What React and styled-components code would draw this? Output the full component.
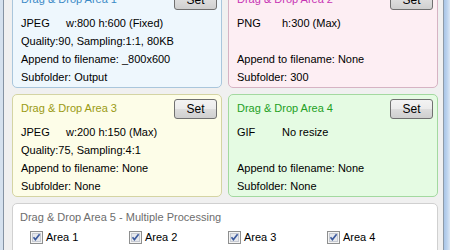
import React from "react";
import styled, { createGlobalStyle } from "styled-components";

const GlobalStyle = createGlobalStyle`
  html, body {
    margin: 0;
    padding: 0;
    width: 450px;
    height: 250px;
    overflow: hidden;
    background: #f0f0f0;
  }
`;

const areas = [
  {
    title: "Drag & Drop Area 1",
    tone: "blue",
    format: "JPEG",
    size: "w:800 h:600 (Fixed)",
    quality: "Quality:90, Sampling:1:1, 80KB",
    append: "_800x600",
    subfolder: "Output",
  },
  {
    title: "Drag & Drop Area 2",
    tone: "pink",
    format: "PNG",
    size: "h:300 (Max)",
    quality: "",
    append: "None",
    subfolder: "300",
  },
  {
    title: "Drag & Drop Area 3",
    tone: "yellow",
    format: "JPEG",
    size: "w:200 h:150 (Max)",
    quality: "Quality:75, Sampling:4:1",
    append: "None",
    subfolder: "None",
  },
  {
    title: "Drag & Drop Area 4",
    tone: "green",
    format: "GIF",
    size: "No resize",
    quality: "",
    append: "None",
    subfolder: "None",
  },
];

const tones = {
  blue: { bg: "#eef7fd", border: "#a9c6dc", title: "#3b8ac6" },
  pink: { bg: "#fdeef3", border: "#d6b3c3", title: "#c733b4" },
  yellow: { bg: "#fdfde8", border: "#d4d4a3", title: "#9a9a12" },
  green: { bg: "#e5fbe3", border: "#a3d9a0", title: "#23a023" },
};

function CheckIcon() {
  return (
    <svg width="13" height="13" viewBox="0 0 13 13">
      <rect x="0.5" y="0.5" width="12" height="12" fill="#f4f4f4" stroke="#8e8f8f" />
      <rect x="2.5" y="2.5" width="8" height="8" fill="#e6e8ec" stroke="#c6cad2" />
      <path d="M3.5 6.2 L5.4 8.6 L9.6 3.2" fill="none" stroke="#3c5a9e" strokeWidth="1.6" />
    </svg>
  );
}

function AreaCard({ area }) {
  return (
    <Card $tone={area.tone}>
      <CardHeader>
        <CardTitle $tone={area.tone}>{area.title}</CardTitle>
        <SetButton>Set</SetButton>
      </CardHeader>
      <InfoList>
        <InfoLine>
          <FormatLabel>{area.format}</FormatLabel>
          {area.size}
        </InfoLine>
        <InfoLine>{area.quality || "\u00a0"}</InfoLine>
        <InfoLine>Append to filename: {area.append}</InfoLine>
        <InfoLine>Subfolder: {area.subfolder}</InfoLine>
      </InfoList>
    </Card>
  );
}

export default function App() {
  return (
    <>
      <GlobalStyle />
      <Window>
        <FrameLeft />
        <Content>
          <AreaGrid>
            {areas.map((a) => (
              <AreaCard key={a.title} area={a} />
            ))}
            <MultiCard>
              <MultiTitle>Drag &amp; Drop Area 5 - Multiple Processing</MultiTitle>
              <CheckRow>
                {["Area 1", "Area 2", "Area 3", "Area 4"].map((l) => (
                  <CheckItem key={l}>
                    <CheckIcon />
                    <span>{l}</span>
                  </CheckItem>
                ))}
              </CheckRow>
            </MultiCard>
          </AreaGrid>
        </Content>
        <FrameRight />
      </Window>
    </>
  );
}

const Window = styled.div`
  display: flex;
  width: 450px;
  height: 250px;
  overflow: hidden;
  font-family: "Liberation Sans", Arial, sans-serif;
  font-size: 11px;
  color: #000;
`;

const FrameLeft = styled.div`
  width: 3px;
  flex-shrink: 0;
  background: #d5e1ee;
  border-right: 1px solid #8593a3;
`;

const FrameRight = styled.div`
  width: 6px;
  flex-shrink: 0;
  border-left: 1px solid #8d9aa8;
  background: linear-gradient(90deg, #a9c5e6 0%, #bcd3ee 50%, #dbe7f4 100%);
`;

const Content = styled.div`
  flex: 1;
  background: #f0f0f0;
  padding: 0 5px 0 8px;
`;

const AreaGrid = styled.div`
  display: grid;
  grid-template-columns: 210px 210px;
  column-gap: 6px;
  row-gap: 6px;
  margin-top: -15px;
`;

const Card = styled.div`
  height: 103px;
  box-sizing: border-box;
  background: ${(p) => tones[p.$tone].bg};
  border: 1px solid ${(p) => tones[p.$tone].border};
  border-radius: 5px;
  padding: 4px 4px 1px 8px;
  display: flex;
  flex-direction: column;
`;

const CardHeader = styled.div`
  display: flex;
  justify-content: space-between;
  align-items: flex-start;
  height: 20px;
`;

const CardTitle = styled.div`
  line-height: 18px;
  color: ${(p) => tones[p.$tone].title};
`;

const SetButton = styled.button`
  width: 43px;
  height: 20px;
  padding: 0;
  margin: 0;
  border: 1px solid #707070;
  border-radius: 3px;
  background: linear-gradient(180deg, #f3f3f3 0%, #ebebeb 50%, #dddddd 51%, #cfcfcf 100%);
  font-family: "Liberation Sans", Arial, sans-serif;
  font-size: 12px;
  color: #000;
  cursor: pointer;
`;

const InfoList = styled.div`
  margin-top: 4px;
  display: flex;
  flex-direction: column;
`;

const InfoLine = styled.div`
  display: flex;
  line-height: 18px;
  height: 18px;
  white-space: nowrap;
`;

const FormatLabel = styled.span`
  width: 45px;
  flex-shrink: 0;
`;

const MultiCard = styled.div`
  grid-column: 1 / span 2;
  height: 60px;
  box-sizing: border-box;
  background: #fff;
  border: 1px solid #d0d0d0;
  border-radius: 5px;
  padding: 4px 8px 0 7px;
`;

const MultiTitle = styled.div`
  line-height: 18px;
  color: #6d6d6d;
`;

const CheckRow = styled.div`
  display: grid;
  grid-template-columns: repeat(4, 99px);
  padding-left: 10px;
  margin-top: 2px;
`;

const CheckItem = styled.label`
  display: flex;
  align-items: center;
  gap: 3px;
  line-height: 18px;
  font-size: 11px;
`;
